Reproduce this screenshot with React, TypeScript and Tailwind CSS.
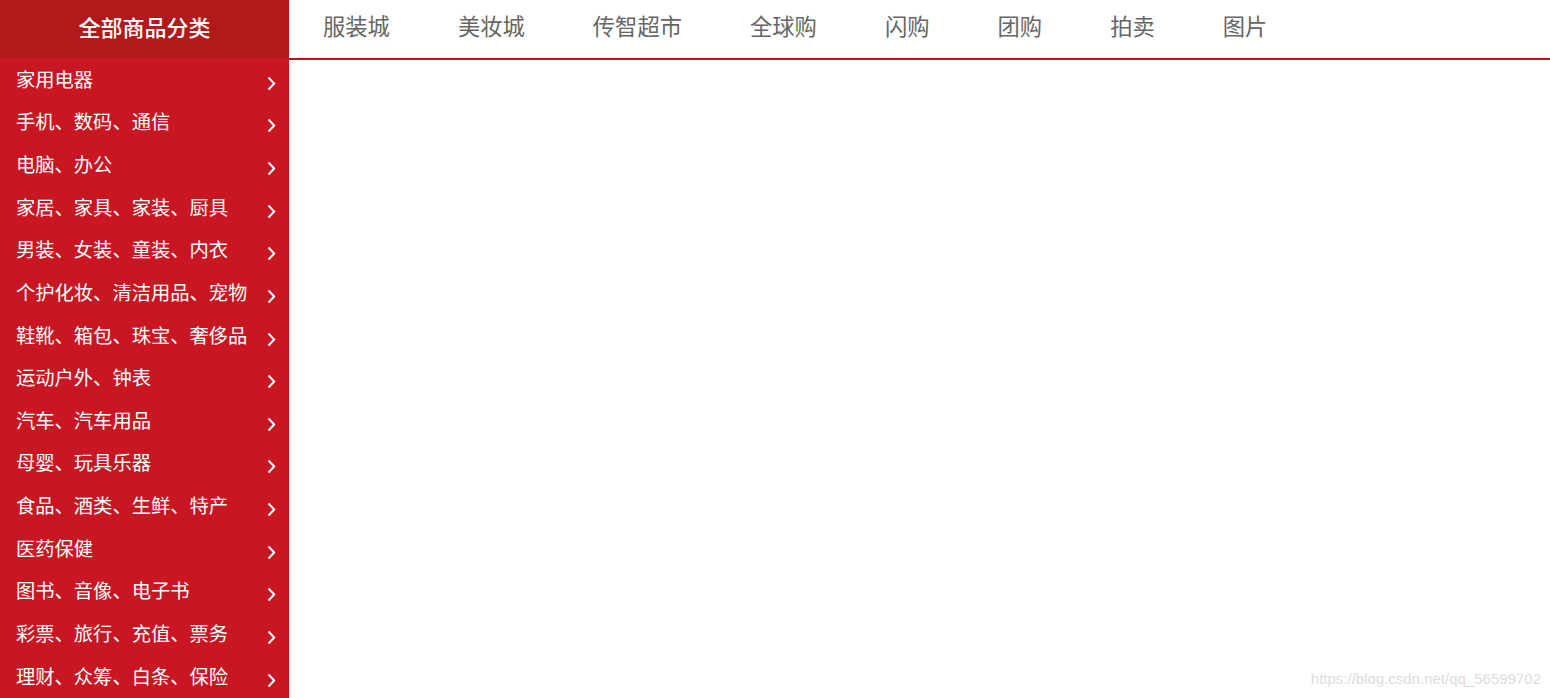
import React from 'react'

const navItems = ['服装城', '美妆城', '传智超市', '全球购', '闪购', '团购', '拍卖', '图片']

const categories = [
  '家用电器',
  '手机、数码、通信',
  '电脑、办公',
  '家居、家具、家装、厨具',
  '男装、女装、童装、内衣',
  '个护化妆、清洁用品、宠物',
  '鞋靴、箱包、珠宝、奢侈品',
  '运动户外、钟表',
  '汽车、汽车用品',
  '母婴、玩具乐器',
  '食品、酒类、生鲜、特产',
  '医药保健',
  '图书、音像、电子书',
  '彩票、旅行、充值、票务',
  '理财、众筹、白条、保险',
]

const Arrow = () => (
  <svg width="9" height="15" viewBox="0 0 9 15" className="mt-2 shrink-0">
    <path d="M1.5 1.5 L7.2 7.5 L1.5 13.5" fill="none" stroke="white" strokeWidth="2" />
  </svg>
)

export default function App() {
  return (
    <div
      className="relative w-[1550px] h-[698px] overflow-hidden bg-white flex"
      style={{ fontFamily: '"Noto Sans CJK SC", "Microsoft YaHei", sans-serif' }}
    >
      {/* left: category dropdown */}
      <div className="w-[289px] shrink-0 flex flex-col">
        <div className="h-[58px] pb-[5px] bg-[#b1191a] flex items-center justify-center text-white text-[22px] font-medium">
          全部商品分类
        </div>
        <ul className="bg-[#c81623] flex-1">
          {categories.map((c) => (
            <li key={c} className="h-[42.64px] pl-4 pr-[13px] flex items-center justify-between text-white text-[19.3px]">
              <span>{c}</span>
              <Arrow />
            </li>
          ))}
        </ul>
      </div>

      {/* right: nav bar */}
      <div className="flex-1">
        <ul className="h-[60px] pb-[6px] border-b-2 border-[#b1191a] flex items-center">
          {navItems.map((n) => (
            <li key={n} className="px-[34px] text-[22.3px] text-[#666]">
              {n}
            </li>
          ))}
        </ul>
      </div>

      <span
        className="absolute right-[9px] bottom-[8px] text-[15px] text-[#dcdcdc]"
        style={{ fontFamily: '"Liberation Sans", Arial, sans-serif' }}
      >
        https://blog.csdn.net/qq_56599702
      </span>
    </div>
  )
}
